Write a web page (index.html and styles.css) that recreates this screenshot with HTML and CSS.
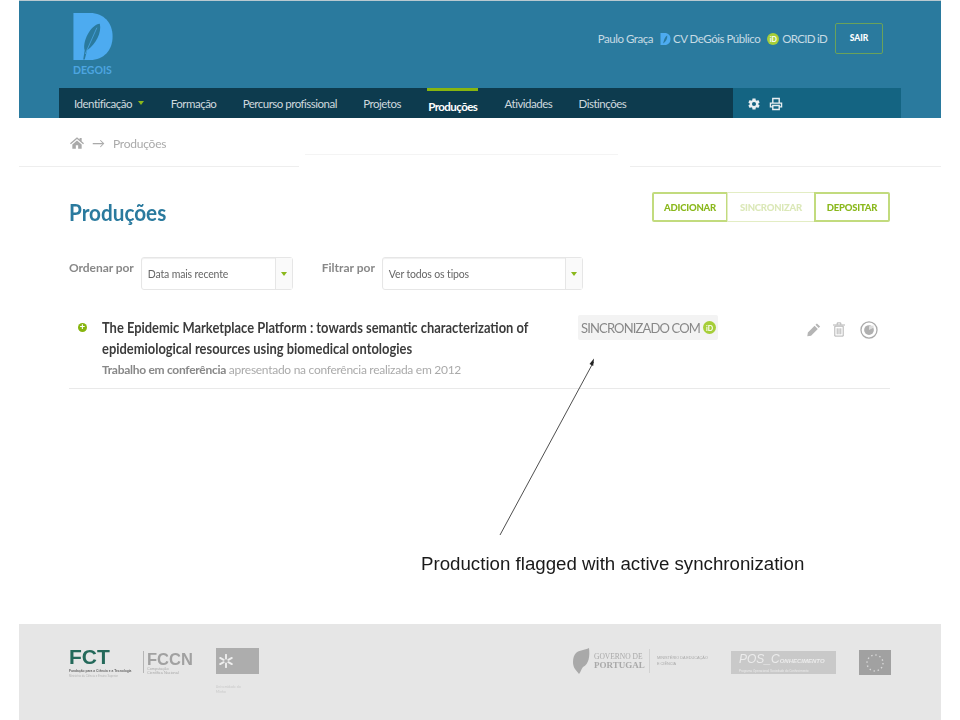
FILE: index.html
```html
<!DOCTYPE html>
<html lang="pt">
<head>
<meta charset="utf-8">
<title>Produções</title>
<link rel="stylesheet" href="styles.css">
</head>
<body>
<div class="screen">
  <header class="top">
    <div class="top-row">
      <div class="logo">
        <svg class="logo-mark" width="40" height="47" viewBox="0 0 40 48" aria-hidden="true">
          <path d="M0 0H17C31 0 40 10 40 24S31 48 17 48H0Z" fill="#4dabf0"/>
          <path d="M10 47.500 11.500 38C9 30 17 12 27 11C29 20 23 32 14 38L11.500 47.500Z" fill="#2a7a9e"/>
          <path d="M12 42 24 15" stroke="#4dabf0" stroke-width=".7" fill="none"/>
        </svg>
        <span class="logo-text">DEGOIS</span>
      </div>
      <div class="user">
        <span>Paulo Graça</span>
        <span class="user-link cv-link">
          <svg width="11" height="12" viewBox="0 0 40 48" aria-hidden="true"><path d="M0 0H17C31 0 40 10 40 24S31 48 17 48H0Z" fill="#4dabf0"/><path d="M11 42C12 30 18 14 27 10C28 22 22 34 11 42Z" fill="#2a7a9e"/></svg>
          CV DeGóis Público
        </span>
        <span class="user-link orcid-link">
          <span class="orcid">iD</span>
          ORCID iD
        </span>
        <a class="exit">SAIR</a>
      </div>
    </div>
    <nav class="nav">
      <ul class="nav-main">
        <li>Identificação <i class="caret nav-caret"></i></li>
        <li>Formação</li>
        <li>Percurso profissional</li>
        <li>Projetos</li>
        <li class="active">Produções</li>
        <li>Atividades</li>
        <li>Distinções</li>
      </ul>
      <div class="nav-tools">
        <svg width="14" height="14" viewBox="0 0 24 24" aria-hidden="true"><path fill="#e8eef1" d="M19.400 13a7.500 7.500 0 0 0 0-2l2.300-1.700-2.300-4-2.600 1.100a7.500 7.500 0 0 0-1.800-1L14.600 2.600H9.400L9 5.400a7.500 7.500 0 0 0-1.800 1L4.600 5.300l-2.300 4L4.600 11a7.500 7.500 0 0 0 0 2l-2.300 1.700 2.300 4 2.600-1.100a7.500 7.500 0 0 0 1.800 1l.4 2.800h5.200l.4-2.800a7.500 7.500 0 0 0 1.800-1l2.600 1.100 2.300-4ZM12 15.500a3.500 3.500 0 1 1 0-7 3.500 3.500 0 0 1 0 7Z"/></svg>
        <svg width="14" height="14" viewBox="0 0 24 24" aria-hidden="true"><path fill="none" stroke="#e8eef1" stroke-width="2.400" d="M6.500 10V2.500h11V10M6.500 17H2.500v-6.500h19V17H17.500M6.500 14.500h11v7h-11Z"/></svg>
      </div>
    </nav>
  </header>

  <div class="crumbs">
    <svg width="14" height="12" viewBox="0 0 24 20" aria-hidden="true"><path fill="#aaa" d="M12 0 0 10.500l1.500 1.700L12 3l10.500 9.200L24 10.500 20 7V1.500h-3.500V4ZM4 12.500V20h6v-6h4v6h6v-7.500L12 5.500Z"/></svg>
    <span class="crumb-arrow">→</span>
    <span class="crumb-text">Produções</span>
  </div>
  <div class="rule-tab"></div>
  <div class="rule-main"><span></span><span></span></div>

  <main class="content">
    <div class="title-row">
      <h1>Produções</h1>
      <div class="actions">
        <a class="btn">ADICIONAR</a>
        <a class="btn off">SINCRONIZAR</a>
        <a class="btn">DEPOSITAR</a>
      </div>
    </div>

    <div class="filters">
      <label class="flabel">Ordenar por</label>
      <div class="select sel-a"><span>Data mais recente</span><b><i class="caret"></i></b></div>
      <label class="flabel second">Filtrar por</label>
      <div class="select sel-b"><span>Ver todos os tipos</span><b><i class="caret"></i></b></div>
    </div>

    <article class="prod">
      <span class="plus"></span>
      <div class="prod-main">
        <h2>The Epidemic Marketplace Platform : towards semantic characterization of epidemiological resources using biomedical ontologies</h2>
        <p><strong>Trabalho em conferência</strong> apresentado na conferência realizada em 2012</p>
      </div>
      <div class="tag">SINCRONIZADO COM <span class="orcid">iD</span></div>
      <div class="tools">
        <svg class="tool-edit" width="14" height="15" viewBox="0 0 24 24" aria-hidden="true"><path fill="#b5b5b5" d="M17 1.500 22.500 7 20 9.500 14.500 4ZM13 5.500 18.500 11 7 22.500 0.500 23.500 1.500 17Z"/></svg>
        <svg class="tool-trash" width="12" height="15" viewBox="0 0 20 24" aria-hidden="true"><path fill="none" stroke="#b0b0b0" stroke-width="1.600" d="M3 6.500h14V23H3ZM0 4.500h20M7 4V1h6v3M7 10v10M10 10v10M13 10v10"/></svg>
        <svg class="tool-share" width="18" height="18" viewBox="0 0 24 24" aria-hidden="true"><circle cx="12" cy="12" r="10.700" fill="none" stroke="#aaa" stroke-width="1.700"/><circle cx="12" cy="12" r="6.500" fill="#b0b0b0"/><path d="M12 12 18 9V6L12 7Z" fill="#ddd"/></svg>
      </div>
    </article>
  </main>

  <footer class="foot">
    <div class="foot-left">
      <div class="fct">
        <span class="fct-big">FCT</span>
        <span class="fct-sub">Fundação para a Ciência e a Tecnologia</span>
        <span class="fct-sub2">Ministério da Ciência e Ensino Superior</span>
      </div>
      <div class="fccn">
        <span class="fccn-big">FCCN</span>
        <span class="fccn-sub">Computação Científica Nacional</span>
      </div>
      <div class="um">
        <div class="um-box">
          <svg width="14" height="14" viewBox="0 0 18 18" aria-hidden="true"><path stroke="#eee" stroke-width="2.400" stroke-linecap="round" d="M9 1v5M9 12v5M1.500 5 6 7.500M12 10.500 16.500 13M1.500 13 6 10.500M12 7.500 16.500 5"/></svg>
        </div>
        <span class="um-sub">Universidade do Minho</span>
      </div>
    </div>
    <div class="foot-right">
      <div class="gov">
        <svg width="17" height="26" viewBox="0 0 17 26" aria-hidden="true"><path fill="#a9a9a9" d="M3 5C6 2 12 2 16 0C17 8 16 16 10 19C8 21 8 24 6 26C3 22 0 20 0 14C0 10 1 7 3 5Z"/></svg>
        <span class="gov-name">GOVERNO DE<b>PORTUGAL</b></span>
        <span class="gov-min">MINISTÉRIO DA EDUCAÇÃO E CIÊNCIA</span>
      </div>
      <div class="pos">
        <span class="pos-big">POS_C<small>ONHECIMENTO</small></span>
        <span class="pos-sub">Programa Operacional Sociedade do Conhecimento</span>
      </div>
      <div class="eu">
        <svg width="24" height="24" viewBox="0 0 24 24" aria-hidden="true"><circle cx="12" cy="12" r="8" fill="none" stroke="#d8d8d8" stroke-width="1.400" stroke-dasharray="1.400 2.800"/></svg>
      </div>
    </div>
  </footer>
</div>

<svg class="arrow" width="960" height="720" viewBox="0 0 960 720" aria-hidden="true">
  <path d="M500 535 593.500 362" stroke="#222" stroke-width=".8" fill="none"/>
  <path d="M594 358.500 593.200 366 589.500 364Z" fill="#222"/>
</svg>
<p class="note">Production flagged with active synchronization</p>
</body>
</html>
```
FILE: styles.css
```css
* { box-sizing: border-box; }
html, body { margin: 0; padding: 0; background: #fff; }
body { width: 960px; height: 720px; overflow: hidden; position: relative; font-family: Lato, "Liberation Sans", sans-serif; color: #555; }
ul { list-style: none; margin: 0; padding: 0; }
h1, h2, p { margin: 0; }

.screen { width: 922px; height: 720px; margin-left: 19px; display: flex; flex-direction: column; filter: blur(.35px); }

.top { height: 118px; border-top: 1px solid #b9c9d0; background: #2a7a9e; display: flex; flex-direction: column; }
.top-row { height: 87px; display: flex; justify-content: space-between; padding: 12px 58px 0 54px; }
.logo { width: 41px; display: flex; flex-direction: column; }
.logo-mark { display: block; }
.logo-text { font-size: 10.500px; line-height: 12px; margin-top: 4px; font-weight: 700; color: #4da5e0; letter-spacing: 0; }
.user { display: flex; align-items: center; height: 31px; margin-top: 10px; font-size: 11.500px; color: #c6dbe4; letter-spacing: -.47px; }
.user-link { display: inline-flex; align-items: center; gap: 3px; margin-left: 7px; }
.cv-link { margin-left: 7px; gap: 2px; }
.orcid-link { letter-spacing: -.7px; }
.orcid { display: inline-flex; align-items: center; justify-content: center; flex: none; width: 12px; height: 12px; border-radius: 50%; background: #a6ce39; color: #fff; font-size: 7px; font-weight: 700; letter-spacing: 0; }
.exit { width: 48px; height: 31px; margin-left: 8px; border: 1px solid #6aa25a; border-radius: 2px; display: flex; align-items: center; justify-content: center; padding-bottom: 2px; font-size: 8.500px; font-weight: 900; color: #fff; letter-spacing: 0; }

.nav { height: 30px; margin: 0 40px; display: flex; }
.nav-main { width: 674px; padding-left: 15px; background: #0d3b4e; display: flex; gap: 26.300px; font-size: 11.500px; color: #cfd9de; letter-spacing: -.5px; }
.nav-main li { line-height: 31px; height: 30px; white-space: nowrap; }
.nav-main li.active { border-top: 3px solid #87b50f; padding: 0 1px; line-height: 31px; color: #fff; font-weight: 700; letter-spacing: -.55px; }
.caret { display: inline-block; width: 0; height: 0; border-left: 3px solid transparent; border-right: 3px solid transparent; border-top: 4px solid #8ab81c; }
.nav-caret { margin-left: 4px; vertical-align: 3px; }
.nav-tools { width: 168px; background: #146482; display: flex; align-items: center; gap: 8px; padding: 1px 0 0 14px; }

.crumbs { height: 36px; padding: 14px 0 0 51px; display: flex; align-items: center; gap: 7px; font-size: 12px; color: #aaa; }
.crumb-arrow { font-size: 13px; margin-left: 1px; margin-right: 1px; }
.crumb-text { letter-spacing: -.25px; }
.rule-tab { height: 1px; margin: 0 323px 0 286px; background: #f4f4f4; }
.rule-main { height: 1px; margin-top: 11px; display: flex; justify-content: space-between; }
.rule-main span { height: 1px; background: #eee; }
.rule-main span:first-child { width: 280px; }
.rule-main span:last-child { width: 311px; }

.content { flex: 1; padding: 25px 51px 0 50px; }
.title-row { display: flex; justify-content: space-between; height: 30px; }
h1 { font-size: 23px; font-weight: 700; color: #2a7a9e; line-height: 41px; transform: scaleX(.9); transform-origin: left center; }
.actions { display: flex; height: 30px; }
.btn { display: flex; align-items: center; justify-content: center; width: 76px; height: 30px; border: 2px solid #c2db7e; font-size: 9.500px; font-weight: 900; color: #8ab81c; letter-spacing: -.2px; }
.btn:first-child { border-radius: 2px 0 0 2px; }
.btn:last-child { border-radius: 0 2px 2px 0; }
.btn + .btn { margin-left: -1px; }
.btn.off { width: 88px; color: #dbe8b8; border-width: 1px; border-color: #e3edc4; }

.filters { display: flex; margin-top: 35px; height: 33px; }
.flabel { font-size: 12px; font-weight: 700; color: #888; line-height: 22px; white-space: nowrap; letter-spacing: -.05px; }
.flabel.second { margin-left: 29px; letter-spacing: 0; }
.select { height: 33px; border: 1px solid #e6e6e6; border-radius: 3px; display: flex; justify-content: space-between; font-size: 10.500px; color: #666; box-shadow: inset 0 1px 1px #f0f0f0; }
.select span { padding: 0 0 0 6px; line-height: 33px; letter-spacing: -.15px; }
.select b { width: 17px; border-left: 1px solid #e6e6e6; background: #fafafa; display: flex; align-items: center; justify-content: center; }
.sel-a { width: 152px; margin-left: 7px; }
.sel-b { width: 201px; margin-left: 7px; }

.prod { margin-top: 25px; height: 74px; border-bottom: 1px solid #e9e9e9; display: flex; }
.plus { width: 9px; height: 9px; margin: 8px 0 0 9px; border-radius: 50%; background: #87b50f; position: relative; flex: none; }
.plus::after { content: "+"; position: absolute; inset: 0; font: 700 9px/9px "Liberation Sans", sans-serif; color: #fff; text-align: center; }
.prod-main { width: 476px; margin-left: 15px; flex: none; padding-top: 2px; }
h2 { width: 500px; font-size: 15px; line-height: 20.500px; font-weight: 700; color: #3c3c3c; transform: scaleX(.86); transform-origin: left top; }
.prod-main p { margin-top: 4px; font-size: 12px; line-height: 16px; color: #aaa; letter-spacing: -.28px; white-space: nowrap; }
.prod-main p strong { color: #888; }
.tag { width: 140px; height: 25px; flex: none; background: #f3f3f3; border-radius: 2px; display: flex; align-items: center; gap: 3px; padding-left: 3px; font-size: 13px; color: #888; letter-spacing: -.85px; white-space: nowrap; }
.tag .orcid { width: 13px; height: 13px; }
.tools { display: flex; align-items: center; height: 29px; margin-left: 89px; }
.tool-trash { margin-left: 12px; }
.tool-share { margin-left: 15px; }

.foot { height: 96px; background: #e6e6e6; display: flex; justify-content: space-between; padding: 24px 50px 0 50px; filter: blur(.6px); }
.foot-left, .foot-right { display: flex; align-items: flex-start; }
.fct { width: 74px; margin-top: -1px; display: flex; flex-direction: column; }
.fct-big { font: 700 21px/20px "Liberation Sans", sans-serif; color: #24695a; letter-spacing: 0; }
.fct-sub { margin-top: 1.500px; font: 700 3.300px/5px "Liberation Sans", sans-serif; color: #666; white-space: nowrap; }
.fct-sub2 { font: 400 2.800px/4px "Liberation Sans", sans-serif; color: #b5b5b5; white-space: nowrap; }
.fccn { padding-left: 3px; border-left: 1px solid #b5b5b5; display: flex; flex-direction: column; height: 22px; margin-top: 3px; }
.fccn-big { font: 700 16.500px/16px "Liberation Sans", sans-serif; color: #a1a1a1; }
.fccn-sub { font: 400 3.800px/4px "Liberation Sans", sans-serif; color: #aaa; width: 34px; }
.um { margin-left: 23px; display: flex; flex-direction: column; }
.um-box { width: 43px; height: 26px; background: #adadad; display: flex; align-items: center; padding-left: 3px; }
.um-sub { width: 34px; margin-top: 11px; font-size: 3.500px; line-height: 5px; color: #c9c9c9; }
.gov { display: flex; align-items: center; margin-top: -1px; height: 28px; width: 157px; }
.gov-name { margin-left: 4px; width: 48px; display: flex; flex-direction: column; font: 400 7.500px/8px "Liberation Serif", serif; color: #a9a9a9; white-space: nowrap; }
.gov-name b { font-size: 9px; }
.gov-min { margin-left: 7px; padding-left: 7px; width: 60px; height: 24px; border-left: 1px solid #d2d2d2; font: 400 3.800px/6px "Liberation Sans", sans-serif; color: #a9a9a9; padding-top: 6px; }
.pos { width: 105px; height: 23px; margin-left: 1px; margin-top: 3px; background: #c9c9c9; display: flex; flex-direction: column; padding-left: 8px; }
.pos-big { font: italic 400 12px/16px "Liberation Sans", sans-serif; color: #ececec; white-space: nowrap; }
.pos-big small { font-size: 6px; font-weight: 700; }
.pos-sub { font: 400 3px/5px "Liberation Sans", sans-serif; color: #ececec; white-space: nowrap; }
.eu { width: 32px; height: 25px; margin-left: 23px; margin-top: 2px; background: #a1a1a1; display: flex; align-items: center; justify-content: center; }

.arrow { position: absolute; left: 0; top: 0; pointer-events: none; }
.note { position: absolute; left: 421px; top: 553px; font: 400 18.700px/21px "Liberation Sans", sans-serif; color: #1a1a1a; white-space: nowrap; }
```
